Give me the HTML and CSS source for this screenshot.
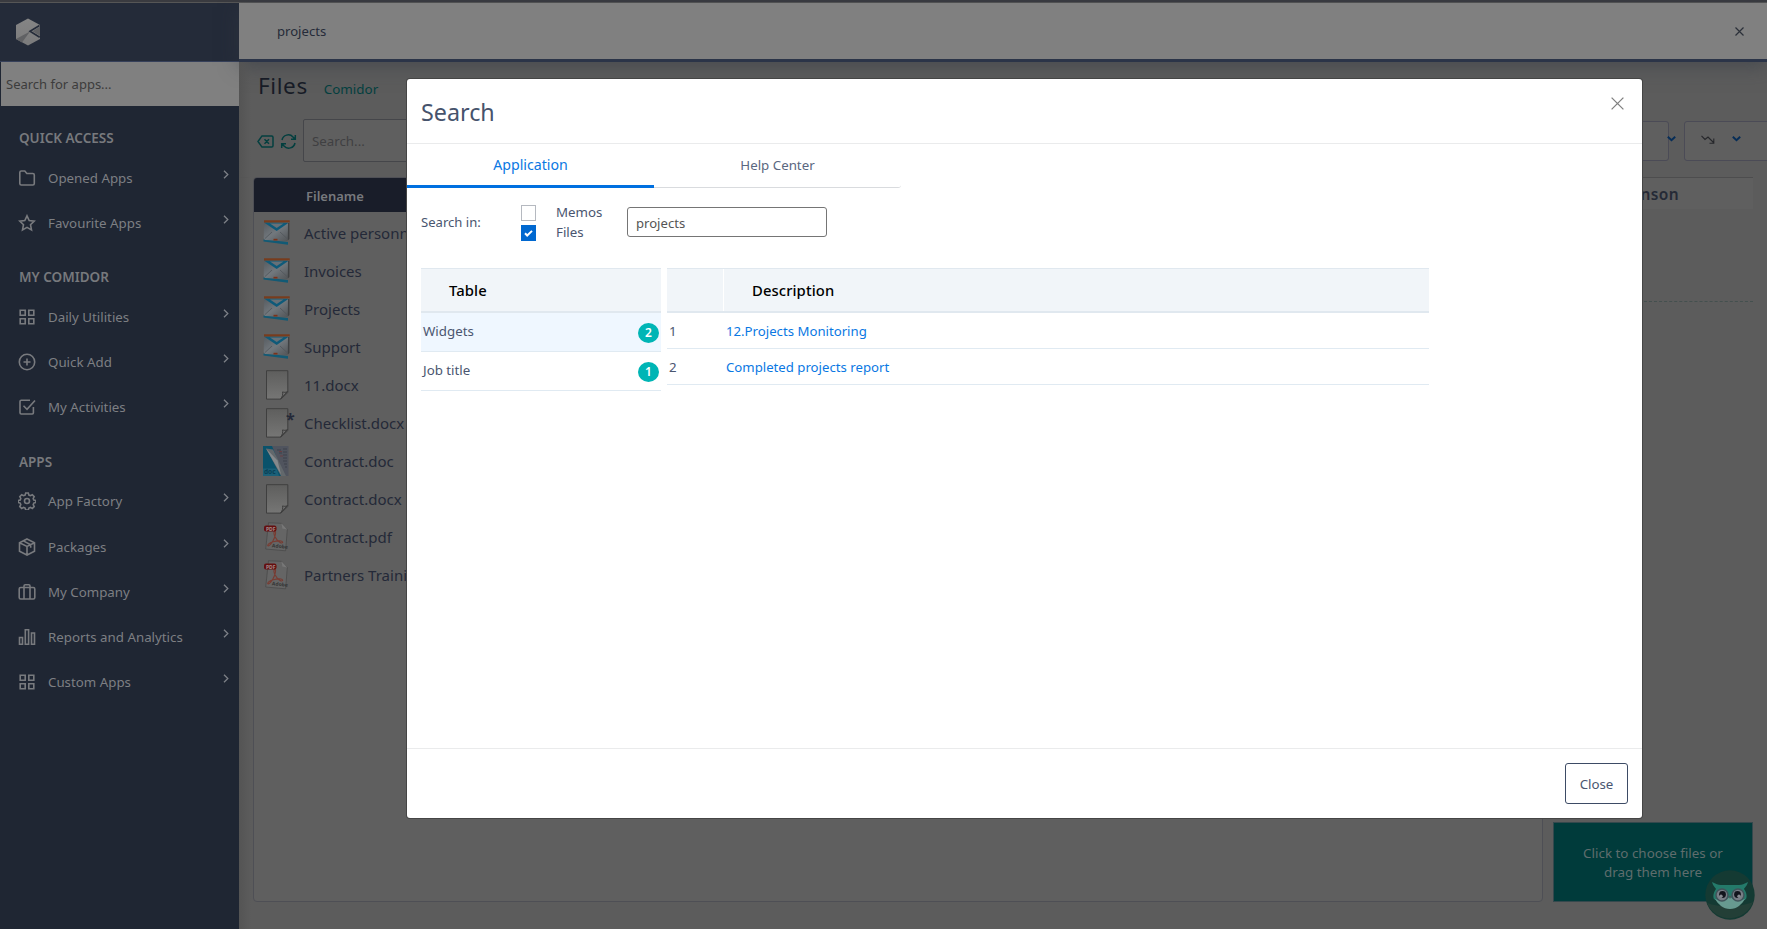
FILE: index.html
```html
<!DOCTYPE html>
<html lang="en">
<head>
<meta charset="utf-8">
<title>Comidor - Search</title>
<link rel="stylesheet" href="styles.css">
</head>
<body>
<svg class="defs" aria-hidden="true">
  <defs>
    <linearGradient id="paper" x1="0" y1="0" x2="0" y2="1"><stop offset="0" stop-color="#5e5e5d"/><stop offset="1" stop-color="#767675"/></linearGradient>
    <linearGradient id="env" x1="0" y1="0" x2="1" y2="1"><stop offset="0" stop-color="#555a5f"/><stop offset=".5" stop-color="#72787d"/><stop offset="1" stop-color="#505356"/></linearGradient>
    <linearGradient id="logo" x1="0" y1="0" x2="0" y2="1"><stop offset="0" stop-color="#858585"/><stop offset="1" stop-color="#7b7b7c"/></linearGradient>
  </defs>
  <symbol id="chev" viewBox="0 0 6 9"><path d="M1 .8 4.8 4.5 1 8.2" fill="none" stroke="#7d8087" stroke-width="1.3"/></symbol>
  <symbol id="grid" viewBox="0 0 18 18"><path d="M2.2 2.2h5v5h-5zM10.8 2.2h5v5h-5zM2.2 10.8h5v5h-5zM10.8 10.8h5v5h-5z"/></symbol>
  <symbol id="mail" viewBox="0 0 27 26">
    <path d="M.5 19.5 25 22v2.8L.5 21.5z" fill="#125a75"/>
    <path d="M1 2h25l-.8 17.5L24 21 2 20 .7 18z" fill="url(#env)"/>
    <path d="M25 3h1.4v16l-1.6 1.5z" fill="#3f4143"/>
    <path d="M2 18.5 9 12M24 18.5 17 12" stroke="#50565b" stroke-width=".8"/>
    <path d="M1 2.5h25L13.700 11z" fill="#0f5a79"/><path d="M7 3.5h13.500L13.700 8z" fill="#677077"/>
    <path d="M1 .3h25.700v2.200H1z" fill="#793c1c"/><path d="M10.500 18.800h4v1.700h-4z" fill="#7c3219"/>
  </symbol>
  <symbol id="doc" viewBox="0 0 27 30"><path d="M3.500.7h21.300v21.800l-6.900 6.600H3.500z" fill="url(#paper)" stroke="#3f3f3f"/><path d="M24.500 21.500c-2 1.300-3.500.8-4.900.4.400 2.600-.2 4.900-1.900 6.800z" fill="#6f6f6f" stroke="#3c3c3c"/></symbol>
  <symbol id="word" viewBox="0 0 27 30"><path d="M8 0h17.500v30H8z" fill="#50545e"/><path d="M0 0h9l12 30H0z" fill="#0a526b"/><path d="M3 2.500 10 3.500 23 30h-5z" fill="#62686c"/><path d="m3 2.500 15 26-3.500-14z" fill="#85898c"/><path d="M14 4h4M16 7h3M20 3h4M20 6h4M20 9h4M20 12h4M20 15h4M21 18h3M22 21h2" stroke="#3d414a"/><path d="M16 5.500h3M17 10h3" stroke="#683e43"/><path d="M0 22.500h13.500L16 30H0z" fill="#1b6078"/></symbol>
  <symbol id="pdf" viewBox="0 0 27 30"><path d="M5.500.8 18.500 1.300l5.800 6.200-1.700 21.300L2.700 27z" fill="#656565" stroke="#474747" stroke-width=".7"/><path d="m18.500 1.300 5.800 6.200-5-.9z" fill="#777"/><path d="M11.500 8.500c2 0 1 6-1.600 10.500-2 3.500-4.800 6-5.200 4.300 1-3.100 9.300-5 13.300-4.300 3 .8 1.500 2.800-.9 1.500-4-2.200-7.500-8.200-5.600-12z" fill="none" stroke="#793b31" stroke-width="1.100"/><rect x="1" y="3.500" width="12.500" height="6" rx="2" fill="#650f10"/></symbol>
</svg>

<div class="app">
  <aside class="sidebar">
    <div class="brand">
      <svg width="26" height="28" viewBox="0 0 26 28"><path d="M13 .5 25 7v14l-12 6.500L1 21V7z" fill="url(#logo)"/><path d="M1 21 15 13.500l-8 11z" fill="#606164"/><path d="M24.500 7.500 15 13.300l9.700 6" fill="none" stroke="#242b39" stroke-width="1.600"/><path d="M25 8.500v9.500l-7.500-4.700z" fill="#5f6063"/></svg>
    </div>
    <div class="app-search">Search for apps...</div>
    <nav class="menu">
      <h2 class="group">QUICK ACCESS</h2>
      <a class="item"><svg class="ico" viewBox="0 0 18 18"><path d="M1.800 3.500q0-1.500 1.500-1.500h3.500l2 2.500h6q1.500 0 1.500 1.500v8.500q0 1.500-1.500 1.500H3.300q-1.500 0-1.500-1.500z"/></svg><span>Opened Apps</span><svg class="chev"><use href="#chev"/></svg></a>
      <a class="item"><svg class="ico" viewBox="0 0 18 18"><path d="m9 1.800 2.200 4.800 5 .6-3.700 3.500 1 5.200L9 13.300l-4.500 2.600 1-5.200-3.700-3.500 5-.6z"/></svg><span>Favourite Apps</span><svg class="chev"><use href="#chev"/></svg></a>
      <h2 class="group group-my">MY COMIDOR</h2>
      <a class="item"><svg class="ico"><use href="#grid"/></svg><span>Daily Utilities</span><svg class="chev"><use href="#chev"/></svg></a>
      <a class="item"><svg class="ico" viewBox="0 0 18 18"><circle cx="9" cy="9" r="7.700"/><path d="M9 5.500v7M5.500 9h7"/></svg><span>Quick Add</span><svg class="chev"><use href="#chev"/></svg></a>
      <a class="item"><svg class="ico" viewBox="0 0 18 18"><path d="M12 2.200H3.200q-1.200 0-1.200 1.200v11.400q0 1.200 1.200 1.200h11q1.200 0 1.200-1.200V9M5.500 7.800 9 11.300l8-8.800"/></svg><span>My Activities</span><svg class="chev"><use href="#chev"/></svg></a>
      <h2 class="group group-apps">APPS</h2>
      <a class="item factory"><svg class="ico" viewBox="0 0 18 18"><circle cx="9" cy="9" r="2.500"/><path d="M7.700 1h2.600l.6 2.100 1.500.6 1.900-1 1.900 1.900-1 1.900.6 1.500 2 .6v1.900l-2 .6-.6 1.500 1 1.900-1.900 1.900-1.900-1-1.500.6-.6 2H7.700l-.6-2-1.500-.6-1.900 1-1.900-1.900 1-1.900-.6-1.500-2-.6V8.600l2-.6.6-1.500-1-1.900 1.900-1.900 1.900 1 1.500-.6z"/></svg><span>App Factory</span><svg class="chev"><use href="#chev"/></svg></a>
      <a class="item"><svg class="ico" viewBox="0 0 18 18"><path d="m9 1 7.500 3.700v8.600L9 17l-7.500-3.700V4.700zM1.500 4.700 9 8.400l7.500-3.700M9 8.400V17M5.300 2.900l7.400 3.800v3"/></svg><span>Packages</span><svg class="chev"><use href="#chev"/></svg></a>
      <a class="item"><svg class="ico" viewBox="0 0 18 18"><rect x="1.200" y="4.500" width="15.600" height="11.500" rx="1.500"/><path d="M6 16V3q0-1.200 1.200-1.200h3.600Q12 1.800 12 3v13"/></svg><span>My Company</span><svg class="chev"><use href="#chev"/></svg></a>
      <a class="item"><svg class="ico" viewBox="0 0 18 18"><path d="M1.500 9.500h3v6.800h-3zM7.300 1.700h3.300v14.600H7.300zM13.500 5h3v11.300h-3z"/></svg><span>Reports and Analytics</span><svg class="chev"><use href="#chev"/></svg></a>
      <a class="item"><svg class="ico"><use href="#grid"/></svg><span>Custom Apps</span><svg class="chev"><use href="#chev"/></svg></a>
    </nav>
  </aside>

  <main class="main">
    <header class="topbar"><span>projects</span><svg width="9" height="9" viewBox="0 0 9 9"><path d="m.5.5 8 8m0-8-8 8" stroke="#2b3039" stroke-width="1.200"/></svg></header>
    <div class="heading"><h1>Files</h1><span class="crumb">Comidor</span></div>
    <div class="toolbar">
      <svg class="tool" width="17" height="13" viewBox="0 0 17 13"><path d="M5 .9h9.700q1.300 0 1.300 1.300v8.600q0 1.300-1.300 1.300H5L1 6.500zM7.500 4.300l4.500 4.500m0-4.500L7.500 8.800" fill="none" stroke="#033f3f" stroke-width="1.500"/></svg>
      <svg class="tool" width="17" height="15" viewBox="0 0 17 15"><path d="M15.300 1v4.300H11M1.700 14V9.700H6M2 6A6.400 6.400 0 0 1 13 3l2.300 2.300M15 9A6.400 6.400 0 0 1 4 12L1.700 9.700" fill="none" stroke="#033f3f" stroke-width="1.500"/></svg>
      <div class="file-search">Search...</div>
      <div class="select select-a"><svg width="9" height="6" viewBox="0 0 9 6"><path d="m.8.8 3.700 3.500L8.200.8" fill="none" stroke="#062d57" stroke-width="1.900"/></svg></div>
      <div class="select select-b"><svg width="14" height="9" viewBox="0 0 14 9"><path d="m.5.8 3.500 3.700 3-2.500 5.500 5.500M12.800 3.500v4.700H8.500" fill="none" stroke="#26272b" stroke-width="1.100"/></svg><svg width="9" height="6" viewBox="0 0 9 6"><path d="m.8.8 3.700 3.500L8.200.8" fill="none" stroke="#062d57" stroke-width="1.900"/></svg></div>
    </div>
    <div class="content">
      <section class="files">
        <div class="files-head">Filename</div>
        <ul class="rows">
          <li><svg class="f f-mail"><use href="#mail"/></svg><span>Active personnel</span></li>
          <li><svg class="f f-mail"><use href="#mail"/></svg><span>Invoices</span></li>
          <li><svg class="f f-mail"><use href="#mail"/></svg><span>Projects</span></li>
          <li><svg class="f f-mail"><use href="#mail"/></svg><span>Support</span></li>
          <li><svg class="f"><use href="#doc"/></svg><span>11.docx</span></li>
          <li><svg class="f"><use href="#doc"/></svg><b class="star">*</b><span>Checklist.docx</span></li>
          <li><div class="f"><svg class="f"><use href="#word"/></svg><small class="tag doc-tag">doc</small></div><span>Contract.doc</span></li>
          <li><svg class="f"><use href="#doc"/></svg><span>Contract.docx</span></li>
          <li><div class="f"><svg class="f"><use href="#pdf"/></svg><small class="tag pdf-tag">PDF</small><small class="tag adobe-tag">Adobe</small></div><span>Contract.pdf</span></li>
          <li><div class="f"><svg class="f"><use href="#pdf"/></svg><small class="tag pdf-tag">PDF</small><small class="tag adobe-tag">Adobe</small></div><span>Partners Training</span></li>
        </ul>
      </section>
      <aside class="side">
        <div class="owner">onson</div>
        <div class="detail"></div>
        <div class="upload">Click to choose files or<br>drag them here</div>
      </aside>
    </div>
  </main>
</div>

<svg class="owl" width="50" height="50" viewBox="0 0 50 50">
  <circle cx="25" cy="25" r="24.700" fill="#143a33"/><path d="M2 33a24.700 24.700 0 0 0 46-1c-12 5-32 6-46 1z" fill="#233f37"/>
  <path d="M7 12c4 2 6 3 9 3h18c3 0 5-1 9-3-1 4-3 5-4 7 3 4 3 8 2 10L25 38.500 9 29c-1-2-1-6 2-10-1-2-3-3-4-7z" fill="#247a6a"/>
  <path d="M10 29c5 2 11 1 15-2 4 3 10 4 15 2-3 5-8 10-15 10s-12-5-15-10z" fill="#679a90"/>
  <circle cx="17" cy="25" r="6" fill="#777d85" stroke="#40545a" stroke-width="1.500"/><circle cx="33" cy="25" r="6" fill="#777d85" stroke="#40545a" stroke-width="1.500"/>
  <circle cx="17.500" cy="24.500" r="3.400" fill="#12151c"/><circle cx="32.500" cy="24.500" r="3.400" fill="#12151c"/><circle cx="16" cy="26.300" r="1.700" fill="#868b91"/><circle cx="34" cy="26.300" r="1.700" fill="#868b91"/>
  <path d="m23.500 26 1.500 3 1.500-3z" fill="#49565a"/>
</svg>

<div class="modal" role="dialog">
  <header class="modal-head"><h2>Search</h2><svg width="13" height="13" viewBox="0 0 13 13"><path d="m.6.6 11.800 11.800m0-11.800L.6 12.400" stroke="#808080" stroke-width="1.300"/></svg></header>
  <div class="modal-body">
    <div class="tabs"><div class="tab active">Application</div><div class="tab">Help Center</div></div>
    <div class="filters">
      <span class="lbl">Search in:</span>
      <div class="checks">
        <label><i class="box"></i><span>Memos</span></label>
        <label><i class="box on"><svg width="9" height="7" viewBox="0 0 9 7"><path d="m1 3.300 2.200 2.200L8 .9" fill="none" stroke="#fff" stroke-width="2"/></svg></i><span>Files</span></label>
      </div>
      <div class="query">projects</div>
    </div>
    <div class="results">
      <div class="table kinds">
        <div class="th">Table</div>
        <div class="tr selected"><span>Widgets</span><b class="badge">2</b></div>
        <div class="tr"><span>Job title</span><b class="badge">1</b></div>
      </div>
      <div class="table hits">
        <div class="th"><span class="num"></span><span class="desc">Description</span></div>
        <div class="tr"><span class="n">1</span><a>12.Projects Monitoring</a></div>
        <div class="tr"><span class="n">2</span><a>Completed projects report</a></div>
      </div>
    </div>
  </div>
  <footer class="modal-foot"><button class="close">Close</button></footer>
</div>
</body>
</html>
```

FILE: styles.css
```css
* { box-sizing: border-box; }
body { margin: 0; width: 1767px; height: 929px; overflow: hidden; background: #5c5c5c; font-family: "Noto Sans", sans-serif; font-size: 13.3px; color: #4a5670; }
h1, h2, ul { margin: 0; padding: 0; font-weight: 400; list-style: none; }
.defs { position: absolute; width: 0; height: 0; }
.app { display: flex; height: 929px; border-top: 2px solid #3a3b40; box-shadow: inset 0 1px #565656; }

/* sidebar */
.sidebar { width: 239px; flex: none; margin-top: 1px; background: #1f2633; color: #7d7f83; }
.brand { height: 59px; padding: 15px 0 0 15px; background: #242b39; border-bottom: 1px solid #36405a; }
.brand svg { display: block; }
.app-search { height: 44px; margin-left: 1px; padding-left: 5px; background: #808080; color: #3c3c3c; line-height: 45px; font-size: 13px; }
.menu { padding-top: 21px; }
.group { height: 23px; line-height: 23px; padding-left: 19px; font-size: 13.5px; font-weight: 600; color: #77797d; margin-bottom: 5px; }
.item { display: flex; align-items: center; height: 45px; padding: 0 10px 0 18px; }
.item span { margin-left: 12px; flex: 1; }
.group-my { margin-top: 21px; }
.group-apps { margin-top: 22px; margin-bottom: 4px; }
.factory { height: 46px; }
.ico { width: 18px; height: 18px; fill: none; stroke: #787a7e; stroke-width: 1.6; }
.chev { width: 6px; height: 9px; margin-bottom: 7px; }

/* page behind the dialog */
.main { flex: 1; min-width: 0; margin-top: 1px; display: flex; flex-direction: column; }
.topbar { height: 59px; flex: none; display: flex; align-items: center; justify-content: space-between; padding: 0 23px 0 38px; background: #808080; border-bottom: 3px solid #2b3448; color: #252b39; font-size: 13.1px; box-shadow: 0 4px 18px rgba(50,55,65,.5); }
.heading { height: 50px; flex: none; display: flex; align-items: baseline; padding: 7px 0 0 19px; background: linear-gradient(90deg,#545454,transparent 12px); color: #171b26; }
.heading h1 { font-size: 22.5px; letter-spacing: .6px; line-height: 34px; }
.crumb { margin-left: 16px; color: #033f3f; font-size: 13.4px; }
.toolbar { height: 66px; flex: none; display: flex; align-items: center; padding-left: 18px; background: linear-gradient(90deg,#545454,transparent 12px); margin-bottom: -1px; }
.tool { margin-right: 6px; margin-bottom: 8px; }
.file-search { width: 300px; height: 43px; margin: 0 0 9px 0; padding-left: 8px; border: 1px solid #45464a; border-radius: 2px; background: #5f5f5f; line-height: 42px; color: #3f4042; }
.select { height: 40px; margin-bottom: 8px; border: 1px solid #4b4b56; border-radius: 3px; background: #5f5f5f; display: flex; align-items: center; }
.select svg { margin-bottom: 4px; }
.select-a { width: 200px; margin-left: auto; justify-content: flex-end; }
.select-a svg { margin-right: -8px; }
.select-b { width: 100px; margin: 0 -17px 8px 15px; padding-left: 16px; gap: 17px; }
.content { flex: 1; min-height: 0; display: flex; padding: 0 14px 27px 14px; background: linear-gradient(90deg,#545454,transparent 12px); }
.files { width: 1290px; flex: none; border: 1px solid #4e4f55; border-radius: 4px; background: #5f5f5f; margin-right: 10px; }
.files-head { height: 34px; background: #191d29; border-radius: 3px 3px 0 0; padding-left: 52px; line-height: 36px; font-size: 13px; font-weight: 600; color: #77797d; }
.rows { padding-top: 2px; }
.rows li { display: flex; align-items: center; height: 38px; padding-left: 9px; font-size: 15px; color: #242938; position: relative; }
.rows span { margin-left: 14px; white-space: nowrap; }
.f { width: 27px; height: 30px; flex: none; display: block; position: relative; }
.f-mail { height: 26px; }
.star { position: absolute; left: 32px; top: 5px; font-size: 16px; line-height: 20px; }
/* labels printed on the file icons */
.tag { position: absolute; font-weight: 700; line-height: 8px; white-space: nowrap; }
.doc-tag { left: 1px; bottom: 0; font-size: 6.5px; color: #093f55; }
.pdf-tag { left: 3px; top: 2.5px; font-size: 5px; color: #a08c8c; }
.adobe-tag { left: 9px; top: 20px; font-size: 5px; color: #343434; transform: rotate(6deg); }
.side { width: 200px; flex: none; display: flex; flex-direction: column; }
.owner { height: 32px; background: #5f5f5f; border-top: 1px solid #4d4d4e; padding-right: 74px; text-align: right; line-height: 32px; font-size: 15.5px; letter-spacing: .4px; font-weight: 600; color: #252a36; }
.detail { height: 93px; border-bottom: 1px dashed #44504f; }
.upload { margin-top: auto; height: 80px; padding-top: 21px; background: #003b3b; border: 1px solid #34484d; text-align: center; line-height: 19px; font-size: 13.4px; color: #5f6d6d; }
.owl { position: absolute; left: 1705px; top: 870px; }

/* dialog */
.modal { position: absolute; left: 407px; top: 79px; width: 1235px; height: 739px; display: flex; flex-direction: column; background: #fff; border-radius: 3px; box-shadow: 0 0 0 1px #454545; }
.modal-head { height: 65px; display: flex; justify-content: space-between; padding: 18px 18px 0 14px; border-bottom: 1px solid #eaebec; }
.modal-head h2 { font-size: 23.3px; line-height: 30px; color: #46536c; }
.modal-head svg { display: block; }
.modal-body { flex: 1; }
.tabs { display: flex; width: 494px; height: 44px; }
.tab { width: 247px; text-align: center; line-height: 42px; border-bottom: 1px solid #d9dbde; border-radius: 0 0 3px 0; color: #5a6780; }
.active { border-bottom: 3px solid #0070e0; color: #0a78e3; border-radius: 0; font-size: 14.2px; line-height: 41px; }
.filters { display: flex; align-items: flex-start; padding: 17px 0 0 14px; height: 80px; }
.lbl { width: 100px; line-height: 34px; font-size: 13.1px; }
.checks label { display: flex; align-items: flex-start; height: 20px; width: 106px; }
.box { width: 15px; height: 16px; border: 1px solid #b5b9c0; margin-right: 20px; display: flex; align-items: center; justify-content: center; }
.on { background: #0068d0; border-color: #0068d0; }
.checks span { line-height: 15px; }
.query { width: 200px; height: 30px; margin-top: 2px; padding-left: 8px; border: 1px solid #757575; border-radius: 3px; line-height: 31px; font-size: 13.1px; color: #555; }
.results { display: flex; gap: 6px; padding-left: 14px; }
.kinds { width: 240px; }
.hits { width: 762px; }
.th { height: 45px; display: flex; line-height: 43px; background: #f1f5f9; border-top: 1px solid #e0e8ef; border-bottom: 2px solid #e0e8ef; font-size: 14.8px; letter-spacing: .1px; font-weight: 500; color: #000; }
.kinds .th { padding-left: 28px; }
.num { width: 57px; border-right: 1px solid #fff; }
.desc { padding-left: 28px; }
.tr { display: flex; border-bottom: 1px solid #e0eaf2; }
.kinds .tr { height: 39px; padding: 0 2px; justify-content: space-between; line-height: 36px; }
.selected { background: #eff7ff; }
.badge { width: 21px; height: 20px; margin-top: 10px; border-radius: 50%; background: #00b5b5; color: #fff; text-align: center; line-height: 19px; font-size: 12px; font-weight: 600; }
.hits .tr { height: 36px; line-height: 37px; padding-left: 2px; }
.n { width: 57px; }
.hits a { color: #0a78e3; font-size: 13.2px; }
.modal-foot { height: 70px; padding: 14px; border-top: 1px solid #eaebec; text-align: right; }
.close { width: 63px; height: 41px; padding: 0; border: 1px solid #3d4b65; border-radius: 3px; background: #fff; font: 13.3px "Noto Sans", sans-serif; color: #4a5670; }
```
